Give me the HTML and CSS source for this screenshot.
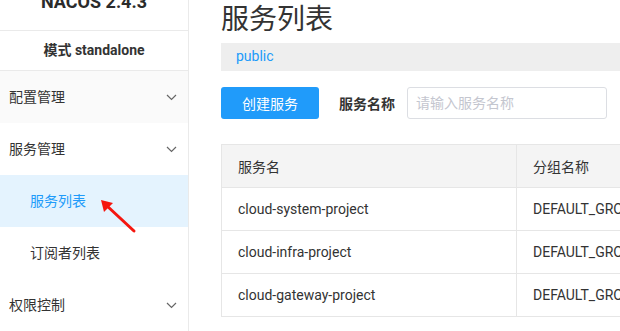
FILE: index.html
```html
<!DOCTYPE html>
<html lang="zh">
<head>
  <meta charset="UTF-8">
  <title>服务列表</title>
  <link rel="stylesheet" href="styles.css">
</head>
<body>

<div class="sidebar">
  <div class="brand"><span class="brand-name">NACOS 2.4.3</span></div>
  <div class="mode">模式 standalone</div>
  <ul class="menu">
    <li class="menu-item hover">配置管理
      <svg class="chevron" width="11" height="7" viewBox="0 0 11 7"><polyline points="1,1 5.5,5.5 10,1" fill="none" stroke="#666" stroke-width="1.2"/></svg>
    </li>
    <li class="menu-item">服务管理
      <svg class="chevron" width="11" height="7" viewBox="0 0 11 7"><polyline points="1,1 5.5,5.5 10,1" fill="none" stroke="#666" stroke-width="1.2"/></svg>
    </li>
    <li class="sub-item active">服务列表</li>
    <li class="sub-item">订阅者列表</li>
    <li class="menu-item">权限控制
      <svg class="chevron" width="11" height="7" viewBox="0 0 11 7"><polyline points="1,1 5.5,5.5 10,1" fill="none" stroke="#666" stroke-width="1.2"/></svg>
    </li>
  </ul>
</div>

<div class="main">
  <h1 class="title">服务列表</h1>
  <div class="namespace"><span>public</span></div>

  <div class="toolbar">
    <button class="btn-primary">创建服务</button>
    <label class="field-label">服务名称</label>
    <input class="field-input" type="text" placeholder="请输入服务名称">
  </div>

  <table class="table">
    <thead>
      <tr><th class="col-name">服务名</th><th>分组名称</th></tr>
    </thead>
    <tbody>
      <tr><td>cloud-system-project</td><td>DEFAULT_GROUP</td></tr>
      <tr><td>cloud-infra-project</td><td>DEFAULT_GROUP</td></tr>
      <tr><td>cloud-gateway-project</td><td>DEFAULT_GROUP</td></tr>
    </tbody>
  </table>
</div>

<svg class="arrow" width="50" height="45" viewBox="0 0 50 45">
  <line x1="41" y1="38" x2="13" y2="12" stroke="#f5160f" stroke-width="3" stroke-linecap="round"/>
  <polygon points="8,7 20,10 11,19" fill="#f5160f"/>
</svg>

</body>
</html>
```

FILE: styles.css
```css
html, body {
  margin: 0;
  padding: 0;
  height: 100%;
  overflow: hidden;
}
body {
  display: flex;
  font-family: Roboto, "Noto Sans CJK SC", sans-serif;
  font-size: 14px;
  color: #333;
  background: #fff;
}
.sidebar {
  width: 188px;
  flex-shrink: 0;
  border-right: 1px solid #eaeaea;
  height: 100%;
}
.brand {
  height: 30px;
  overflow: hidden;
  text-align: center;
  border-bottom: 1px solid #eaeaea;
}
.brand-name {
  display: block;
  margin-top: -8px;
  line-height: 20px;
  font-size: 18px;
  font-weight: bold;
  color: #2b2b2b;
}
.mode {
  height: 39px;
  line-height: 38px;
  text-align: center;
  font-size: 14px;
  font-weight: bold;
  color: #333;
  border-bottom: 1px solid #eaeaea;
}
.menu {
  list-style: none;
  margin: 0;
  padding: 0;
}
.menu-item, .sub-item {
  height: 52px;
  line-height: 50px;
  display: flex;
  align-items: center;
}
.menu-item {
  padding: 0 11px 0 9px;
  justify-content: space-between;
  color: #333;
}
.menu-item.hover {
  background: #fafafa;
}
.sub-item {
  padding-left: 30px;
  color: #333;
}
.sub-item.active {
  background: #e4f3fe;
  color: #209bfa;
}
.chevron {
  display: block;
}
.main {
  flex: 1;
  min-width: 0;
  padding-left: 32px;
  overflow: hidden;
}
.title {
  margin: 0;
  font-size: 28px;
  font-weight: normal;
  line-height: 40px;
  color: #333;
}
.namespace {
  margin-top: 3px;
  height: 28px;
  line-height: 27px;
  padding-left: 15px;
  background: #eeeeee;
  color: #209bfa;
}
.toolbar {
  display: flex;
  align-items: center;
  margin-top: 16px;
}
.btn-primary {
  width: 98px;
  height: 32px;
  border: none;
  border-radius: 3px;
  background: #209bfa;
  color: #fff;
  font-family: inherit;
  font-size: 14px;
}
.field-label {
  margin-left: 20px;
  margin-right: 12px;
  font-weight: bold;
  color: #333;
}
.field-input {
  box-sizing: border-box;
  width: 200px;
  height: 32px;
  border: 1px solid #dcdee3;
  border-radius: 3px;
  padding: 0 8px;
  font-family: inherit;
  font-size: 14px;
}
.field-input::placeholder {
  color: #c4c6cf;
}
.table {
  margin-top: 25px;
  width: 620px;
  border-collapse: collapse;
  table-layout: fixed;
}
.table th, .table td {
  height: 42px;
  padding: 0 16px;
  border: 1px solid #e6e6e6;
  text-align: left;
  font-weight: normal;
  white-space: nowrap;
  overflow: hidden;
}
.table th {
  background: #f4f4f4;
}
.col-name {
  width: 262px;
}
.arrow {
  position: absolute;
  left: 93px;
  top: 193px;
}
```
